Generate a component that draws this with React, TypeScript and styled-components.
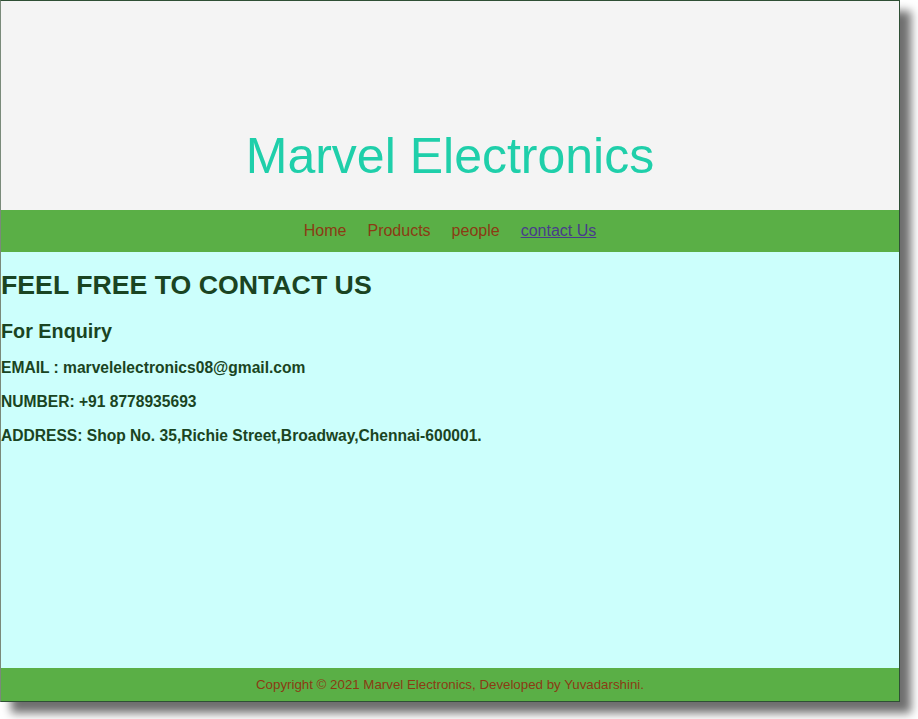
import React from "react";
import styled, { createGlobalStyle } from "styled-components";

const GlobalStyle = createGlobalStyle`
  html, body {
    margin: 0;
    padding: 0;
    background: #ffffff;
    font-family: "Liberation Sans", Arial, sans-serif;
  }
`;

const Page = styled.div`
  width: 898px;
  margin-bottom: 17px;
  border: 1px solid #2f4f35;
  border-left-color: #7a8a7a;
  box-shadow: 11px 11px 9px #6f6f6f;
  display: flex;
  flex-direction: column;
`;

const Header = styled.header`
  height: 209px;
  box-sizing: border-box;
  background: #f4f4f4;
  display: flex;
  align-items: flex-end;
  justify-content: center;
  padding-bottom: 25px;
`;

const Title = styled.h1`
  margin: 0;
  font-size: 50px;
  font-weight: normal;
  line-height: normal;
  color: #1fcfaa;
`;

const Nav = styled.nav`
  height: 42px;
  background: #5aaf46;
  display: flex;
  align-items: center;
  justify-content: center;
  gap: 21px;
`;

const NavLink = styled.a<{ $active?: boolean }>`
  font-size: 16px;
  color: ${(p) => (p.$active ? "#483d8b" : "#8b3b14")};
  text-decoration: ${(p) => (p.$active ? "underline" : "none")};
  cursor: pointer;
`;

const Content = styled.main`
  height: 416px;
  box-sizing: border-box;
  background: #ccfffc;
  padding-top: 18px;
  color: #1a4422;
`;

const Heading = styled.h2`
  margin: 0 0 19px;
  font-size: 26.7px;
  font-weight: bold;
  line-height: normal;
`;

const SubHeading = styled.h3`
  margin: 0 0 16px;
  font-size: 19.8px;
  font-weight: bold;
  line-height: normal;
`;

const Line = styled.p`
  margin: 0 0 16px;
  font-size: 15.6px;
  font-weight: bold;
  line-height: normal;
`;

const Footer = styled.footer`
  height: 33px;
  background: #5aaf46;
  display: flex;
  align-items: center;
  justify-content: center;
  font-size: 13.3px;
  color: #8b3b14;
`;

export default function App() {
  return (
    <>
      <GlobalStyle />
      <Page>
        <Header>
          <Title>Marvel Electronics</Title>
        </Header>
        <Nav>
          <NavLink>Home</NavLink>
          <NavLink>Products</NavLink>
          <NavLink>people</NavLink>
          <NavLink $active>contact Us</NavLink>
        </Nav>
        <Content>
          <Heading>FEEL FREE TO CONTACT US</Heading>
          <SubHeading>For Enquiry</SubHeading>
          <Line>EMAIL : marvelelectronics08@gmail.com</Line>
          <Line>NUMBER: +91 8778935693</Line>
          <Line>ADDRESS: Shop No. 35,Richie Street,Broadway,Chennai-600001.</Line>
        </Content>
        <Footer>Copyright © 2021 Marvel Electronics, Developed by Yuvadarshini.</Footer>
      </Page>
    </>
  );
}
